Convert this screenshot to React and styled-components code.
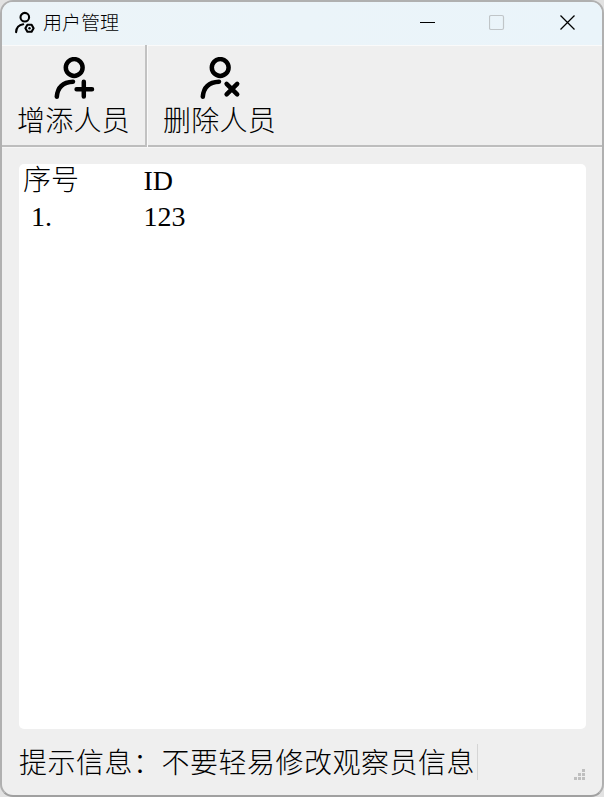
import React from "react";
import styled, { createGlobalStyle } from "styled-components";

const GlobalStyle = createGlobalStyle`
  * { box-sizing: border-box; }
  body { margin: 0; background: #e2e2e2; overflow: hidden; }
`;

const Window = styled.main`
  width: 604px;
  height: 797px;
  display: flex;
  flex-direction: column;
  border: 2px solid #b0b0b0;
  border-bottom-color: #a0a0a0;
  border-radius: 13px;
  overflow: hidden;
  background: #efefef;
  color: #000;
  font-family: "Liberation Serif", "Noto Sans CJK SC", serif;
  font-weight: 300;
`;

const TitleBar = styled.header`
  height: 43px;
  flex: none;
  display: flex;
  align-items: center;
  padding: 0 26px 2px 12px;
  background: linear-gradient(90deg, #ecf4f8, #eaf4fa);
`;

const Title = styled.h1`
  margin: -2px auto 0 7px;
  font: 300 19px/28px "Noto Sans CJK SC", sans-serif;
`;

const WindowControls = styled.div`
  display: flex;
  gap: 53px;
`;

const ControlButton = styled.button`
  display: flex;
  width: 17px;
  height: 17px;
  padding: 0;
  border: 0;
  background: none;
  color: ${({ $muted }) => ($muted ? "#c0c5c8" : "#000")};
`;

const Toolbar = styled.nav`
  height: 103px;
  flex: none;
  display: flex;
  border-bottom: 1px solid #f6f6f6;
`;

const ToolButton = styled.button`
  width: ${({ $width }) => $width};
  display: flex;
  flex-direction: column;
  align-items: center;
  padding: 12px 0 0;
  border: 0;
  border-right: ${({ $divided }) => ($divided ? "2px solid #c2c2c2" : "0")};
  border-bottom: 2px solid #bdbdbd;
  background: none;
  box-shadow: inset 0 1px #fafafa;
  color: #000;
  font: 300 28px/41px "Noto Sans CJK SC", sans-serif;
  letter-spacing: 0.2px;
  white-space: nowrap;
`;

const ToolGap = styled.div`
  width: 1px;
  background: #fafafa;
`;

const ToolbarSpace = styled.div`
  flex: 1;
  border-bottom: 2px solid #bdbdbd;
  box-shadow: inset 0 1px #fafafa;
`;

const ListPanel = styled.section`
  width: 567px;
  height: 565px;
  flex: none;
  margin: 16px 0 0 16.5px;
  padding: 0 4.5px;
  border-radius: 5px;
  background: #fff;
`;

const ListRow = styled.div`
  height: 36px;
  display: grid;
  grid-template-columns: 120.5px 1fr;
  font-size: 28px;
  line-height: 33px;
`;

const Cell = styled.span`
  padding-left: ${({ $indent }) => $indent || "0"};
`;

const StatusBar = styled.footer`
  flex: 1;
  display: flex;
  align-items: flex-start;
  justify-content: space-between;
  padding: 15px 16px 0 17px;
`;

const StatusText = styled.p`
  height: 36px;
  width: 459px;
  margin: 0;
  border-right: 1px solid #d5d5d5;
  font: 300 28px/34px "Noto Sans CJK SC", sans-serif;
  letter-spacing: 0.5px;
  white-space: nowrap;
`;

const ResizeGrip = styled.svg`
  margin-top: 25px;
`;

function PersonIcon({ kind }) {
  return (
    <svg width="42" height="42" viewBox="0 0 42 42" fill="none" stroke="currentColor" strokeWidth="4.5" strokeLinecap="round">
      <circle cx="21.2" cy="10.5" r="8.4" />
      <path d="M3.8 39.7C4.5 31 9.5 25.2 20 24.7" />
      {kind === "add" && <path d="M30.8 24.8v14.8M23.6 32.2h15.4" />}
      {kind === "remove" && <path d="m27.6 26.8 10.6 10.6M38.2 26.8 27.6 37.4" />}
    </svg>
  );
}

function ManageIcon() {
  return (
    <svg width="22" height="24" viewBox="0 0 22 24" fill="none" stroke="currentColor" strokeWidth="2.1" strokeLinecap="round">
      <circle cx="10.8" cy="6.2" r="4.3" />
      <path d="M2.1 21.1C2.4 16.5 5 13.8 9.2 13.3" />
      <path d="m13.4 13.8h4.2l2 3.5-2 3.5h-4.2l-2-3.5Z" strokeLinejoin="round" />
      <circle cx="15.5" cy="17.3" r="1.2" fill="currentColor" stroke="none" />
    </svg>
  );
}

export default function App() {
  return (
    <>
      <GlobalStyle />
      <Window>
        <TitleBar>
          <ManageIcon />
          <Title>用户管理</Title>
          <WindowControls>
            <ControlButton aria-label="最小化">
              <svg width="17" height="17"><path d="M1 8.5h15" stroke="currentColor" /></svg>
            </ControlButton>
            <ControlButton aria-label="最大化" $muted disabled>
              <svg width="17" height="17"><rect x="0.5" y="1.5" width="14" height="14" rx="1.5" fill="none" stroke="currentColor" strokeWidth="1.2" /></svg>
            </ControlButton>
            <ControlButton aria-label="关闭">
              <svg width="17" height="17"><path d="m1.5 1.5 14 14m0-14-14 14" stroke="currentColor" strokeWidth="1.3" /></svg>
            </ControlButton>
          </WindowControls>
        </TitleBar>
        <Toolbar>
          <ToolButton $width="145px" $divided>
            <PersonIcon kind="add" />
            增添人员
          </ToolButton>
          <ToolGap />
          <ToolButton $width="143px">
            <PersonIcon kind="remove" />
            删除人员
          </ToolButton>
          <ToolbarSpace />
        </Toolbar>
        <ListPanel>
          <ListRow><Cell>序号</Cell><Cell>ID</Cell></ListRow>
          <ListRow><Cell $indent="8px">1.</Cell><Cell>123</Cell></ListRow>
        </ListPanel>
        <StatusBar>
          <StatusText>提示信息：不要轻易修改观察员信息</StatusText>
          <ResizeGrip width="12" height="12" fill="#bfbfbf">
            <path d="M8 0h3v3H8zM4 4h3v3H4zM8 4h3v3H8zM0 8h3v3H0zM4 8h3v3H4zM8 8h3v3H8z" />
          </ResizeGrip>
        </StatusBar>
      </Window>
    </>
  );
}
